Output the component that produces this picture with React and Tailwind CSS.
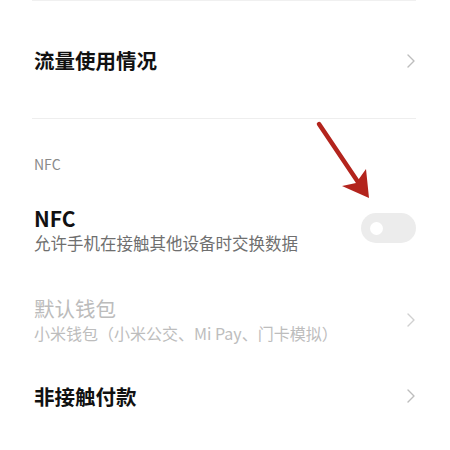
import React from 'react';

const font = { fontFamily: '"Noto Sans CJK SC", "Noto Sans", sans-serif' };

const Chevron = ({ color = '#bdbdbd' }) => (
  <svg width="10" height="16" viewBox="0 0 10 16" fill="none">
    <polyline points="2,2 8,8 2,14" stroke={color} strokeWidth="1.4" strokeLinecap="round" strokeLinejoin="round" />
  </svg>
);

const Toggle = () => (
  <div className="w-[55px] h-[30px] rounded-full bg-[#ececec] flex items-center pl-[9px]">
    <div className="w-[13px] h-[13px] rounded-full bg-white" />
  </div>
);

export default function App() {
  return (
    <div className="relative w-[450px] h-[450px] overflow-hidden bg-white pl-[32px] pr-[34px]" style={font}>
      <div className="border-t border-[#f0f0f0]" />

      <div className="h-[117px] pt-[2px] flex items-center justify-between pl-[2px]">
        <span className="text-[20.5px] font-bold text-[#111]">流量使用情况</span>
        <Chevron />
      </div>
      <div className="border-t border-[#eeeeee]" />

      <div className="pt-[36px] pl-[2px] text-[14px] leading-[18px] text-[#8a8a8a]">NFC</div>

      <div className="mt-[32px] flex justify-between pl-[2px]">
        <div>
          <div className="text-[21px] leading-[26px] font-bold text-[#111]">NFC</div>
          <div className="text-[16.5px] leading-[24px] text-[#6f6f6f]">允许手机在接触其他设备时交换数据</div>
        </div>
        <div className="mt-[8px]">
          <Toggle />
        </div>
      </div>

      <div className="mt-[40px] flex items-center justify-between pl-[2px]">
        <div>
          <div className="text-[20.5px] leading-[26px] text-[#bcbcbc]">默认钱包</div>
          <div className="text-[16px] leading-[24px] text-[#bdbdbd]">小米钱包（小米公交、Mi Pay、门卡模拟）</div>
        </div>
        <Chevron color="#d0d0d0" />
      </div>

      <div className="mt-[38px] h-[26px] flex items-center justify-between pl-[2px]">
        <span className="text-[20.5px] leading-[26px] font-bold text-[#111]">非接触付款</span>
        <Chevron />
      </div>

      {/* annotation arrow pointing at the switch */}
      <svg className="absolute left-0 top-0 pointer-events-none" width="450" height="450" viewBox="0 0 450 450">
        <line x1="319" y1="124" x2="360" y2="185" stroke="#b3241d" strokeWidth="4.5" strokeLinecap="round" />
        <path d="M369 198 L342 186 L356 183 L366 169 Z" fill="#b3241d" />
      </svg>
    </div>
  );
}
